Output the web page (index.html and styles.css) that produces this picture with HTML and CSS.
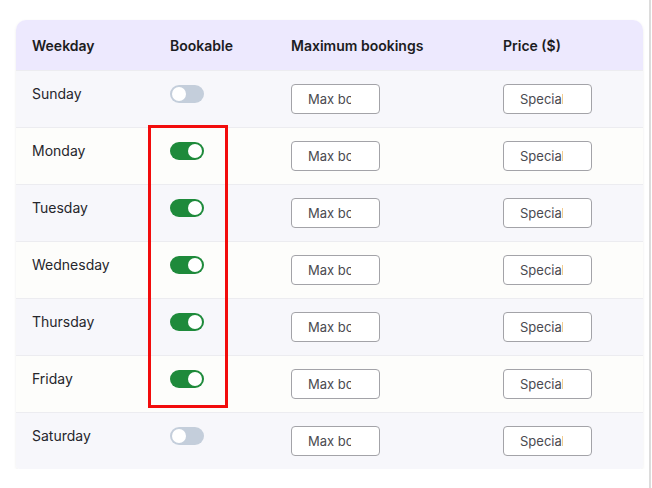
FILE: index.html
```html
<!DOCTYPE html>
<html>
<head>
<meta charset="utf-8">
<link rel="stylesheet" href="styles.css">
</head>
<body>
<div class="card">
  <div class="row head">
    <div class="cell">Weekday</div>
    <div class="cell">Bookable</div>
    <div class="cell">Maximum bookings</div>
    <div class="cell">Price ($)</div>
  </div>
  <div class="row odd">
    <div class="cell up">Sunday</div>
    <div class="cell up"><span class="toggle"></span></div>
    <div class="cell"><span class="input"><span class="ph">Max bookings</span></span></div>
    <div class="cell"><span class="input"><span class="ph">Special price</span></span></div>
  </div>
  <div class="row even">
    <div class="cell up">Monday</div>
    <div class="cell up"><span class="toggle on"></span></div>
    <div class="cell"><span class="input"><span class="ph">Max bookings</span></span></div>
    <div class="cell"><span class="input"><span class="ph">Special price</span></span></div>
  </div>
  <div class="row odd">
    <div class="cell up">Tuesday</div>
    <div class="cell up"><span class="toggle on"></span></div>
    <div class="cell"><span class="input"><span class="ph">Max bookings</span></span></div>
    <div class="cell"><span class="input"><span class="ph">Special price</span></span></div>
  </div>
  <div class="row even">
    <div class="cell up">Wednesday</div>
    <div class="cell up"><span class="toggle on"></span></div>
    <div class="cell"><span class="input"><span class="ph">Max bookings</span></span></div>
    <div class="cell"><span class="input"><span class="ph">Special price</span></span></div>
  </div>
  <div class="row odd">
    <div class="cell up">Thursday</div>
    <div class="cell up"><span class="toggle on"></span></div>
    <div class="cell"><span class="input"><span class="ph">Max bookings</span></span></div>
    <div class="cell"><span class="input"><span class="ph">Special price</span></span></div>
  </div>
  <div class="row even">
    <div class="cell up">Friday</div>
    <div class="cell up"><span class="toggle on"></span></div>
    <div class="cell"><span class="input"><span class="ph">Max bookings</span></span></div>
    <div class="cell"><span class="input"><span class="ph">Special price</span></span></div>
  </div>
  <div class="row odd">
    <div class="cell up">Saturday</div>
    <div class="cell up"><span class="toggle"></span></div>
    <div class="cell"><span class="input"><span class="ph">Max bookings</span></span></div>
    <div class="cell"><span class="input"><span class="ph">Special price</span></span></div>
  </div>
  <div class="highlight"></div>
</div>
<div class="edge"></div>
</body>
</html>
```
FILE: styles.css
```css
html, body {
  margin: 0;
  padding: 0;
  background: #ffffff;
}
body {
  font-family: Inter, "Noto Sans", "Liberation Sans", sans-serif;
  color: #26262c;
  font-size: 14px;
}
.card {
  position: relative;
  margin: 20px 0 0 16px;
  width: 627px;
  border-radius: 10px 10px 4px 4px;
  overflow: hidden;
  box-shadow: 0 1px 3px rgba(0, 0, 0, 0.08);
}
.row {
  display: grid;
  grid-template-columns: 138px 121px 212px 1fr;
  align-items: center;
  height: 57px;
  border-top: 1px solid #ececf0;
  box-sizing: border-box;
}
.row.head {
  height: 50px;
  border-top: none;
  background: #ede9fe;
  font-weight: 600;
  color: #1c1c22;
}
.row.odd { background: #f7f7fb; }
.row.even { background: #fdfdfb; }
.cell {
  padding-left: 16px;
  display: flex;
  align-items: center;
}
.cell.up {
  margin-bottom: 11px;
}
.toggle {
  position: relative;
  display: inline-block;
  width: 34px;
  height: 18px;
  border-radius: 9px;
  background: #c4cedb;
}
.toggle::after {
  content: "";
  position: absolute;
  top: 2px;
  left: 2px;
  width: 14px;
  height: 14px;
  border-radius: 50%;
  background: #ffffff;
}
.toggle.on { background: #1e8a3b; }
.toggle.on::after { left: 18px; }
.input {
  display: flex;
  align-items: center;
  width: 89px;
  height: 30px;
  box-sizing: border-box;
  border: 1px solid #a3a3a8;
  border-radius: 4px;
  background: #ffffff;
  padding-left: 16px;
}
.ph {
  display: block;
  width: 43px;
  overflow: hidden;
  white-space: nowrap;
  font-size: 13px;
  color: #4a4a50;
}
.highlight {
  position: absolute;
  left: 132px;
  top: 105px;
  width: 80px;
  height: 283px;
  box-sizing: border-box;
  border: 3px solid #f20c0c;
}
.edge {
  position: fixed;
  top: 0;
  bottom: 0;
  left: 649px;
  width: 2px;
  background: #dcdcdc;
}
```
